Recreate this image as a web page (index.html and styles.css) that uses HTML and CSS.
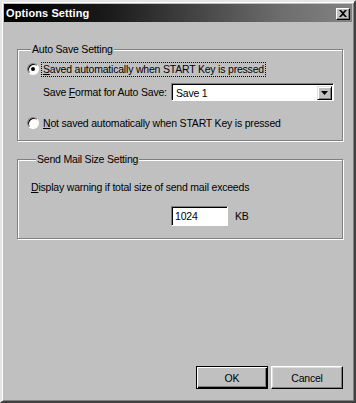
FILE: index.html
```html
<!DOCTYPE html>
<html>
<head>
<meta charset="utf-8">
<link rel="stylesheet" href="styles.css">
</head>
<body>
<div class="window">
  <div class="titlebar">
    <span class="title">Options Setting</span>
    <span class="close">
      <svg width="8" height="7" viewBox="0 0 8 7"><path d="M0 0h2l2 2 2-2h2L5 3.5 8 7H6L4 5 2 7H0l3-3.5z" fill="#000"/></svg>
    </span>
  </div>
  <div class="content">
    <fieldset class="group group-autosave">
      <legend>Auto Save Setting</legend>
      <div class="radio-row">
        <span class="radio checked"><span class="dot"></span></span>
        <span class="label focus"><u>S</u>aved automatically when START Key is pressed</span>
      </div>
      <div class="format-row">
        <span class="label">Save <u>F</u>ormat for Auto Save:</span>
        <div class="combo">
          <span class="combo-value">Save 1</span>
          <span class="combo-btn"><svg width="7" height="4" viewBox="0 0 7 4"><path d="M0 0h7L3.5 4z" fill="#000"/></svg></span>
        </div>
      </div>
      <div class="radio-row second">
        <span class="radio"></span>
        <span class="label"><u>N</u>ot saved automatically when START Key is pressed</span>
      </div>
    </fieldset>
    <fieldset class="group group-mail">
      <legend>Send Mail Size Setting</legend>
      <div class="warn"><u>D</u>isplay warning if total size of send mail exceeds</div>
      <div class="size-row">
        <span class="textbox">1024</span>
        <span class="unit">KB</span>
      </div>
    </fieldset>
    <div class="buttons">
      <button class="btn default">OK</button>
      <button class="btn">Cancel</button>
    </div>
  </div>
</div>
</body>
</html>
```

FILE: styles.css
```css
html, body {
  margin: 0;
  padding: 0;
  background: #c0c0c0;
}
body {
  font-family: "Liberation Sans", Arial, sans-serif;
  font-size: 10.5px;
  letter-spacing: -0.2px;
  color: #000;
}
.window {
  box-sizing: border-box;
  width: 356px;
  height: 403px;
  background: #c0c0c0;
  border-top: 2px solid #e6e6e6;
  border-left: 2px solid #e6e6e6;
  border-right: 2px solid #404040;
  border-bottom: 2px solid #404040;
  box-shadow: inset 1px 1px #fff, inset -1px -1px #808080;
  padding: 2px;
  display: flex;
  flex-direction: column;
}
.titlebar {
  height: 18px;
  flex: none;
  display: flex;
  align-items: center;
  justify-content: space-between;
  background: linear-gradient(to right, #000 0%, #1a1a1a 30%, #6e6e6e 80%, #828282 100%);
  padding: 0 2px;
}
.title {
  color: #fff;
  font-weight: bold;
  font-size: 11px;
  letter-spacing: 0.1px;
}
.close {
  width: 14px;
  height: 12px;
  box-sizing: border-box;
  background: #c0c0c0;
  border-top: 1px solid #fff;
  border-left: 1px solid #fff;
  border-right: 1px solid #000;
  border-bottom: 1px solid #000;
  box-shadow: inset -1px -1px #808080;
  display: flex;
  align-items: center;
  justify-content: center;
  margin-top: 1px;
}
.content {
  flex: 1;
  display: flex;
  flex-direction: column;
  padding: 20px 9px 10px 13px;
}
.group {
  margin: 0;
  padding: 6px 8px 10px 8px;
  border: 1px solid #808080;
  box-shadow: inset 1px 1px #fff, 1px 1px #fff;
  min-width: 0;
}
.group legend {
  padding: 0 1px;
  margin-left: 5px;
  line-height: 14px;
  background: #c0c0c0;
}
.radio-row {
  display: flex;
  align-items: center;
  height: 14px;
}
.radio-row.second {
  margin-top: 15px;
}
.radio {
  width: 12px;
  height: 12px;
  box-sizing: border-box;
  border-radius: 50%;
  background: #fff;
  border: 1px solid;
  border-color: #808080 #fff #fff #808080;
  box-shadow: inset 1px 1px #000;
  display: flex;
  align-items: center;
  justify-content: center;
  margin-left: 1px;
  margin-right: 4px;
  flex: none;
}
.radio .dot {
  width: 4px;
  height: 4px;
  border-radius: 50%;
  background: #000;
}
.label {
  white-space: nowrap;
  line-height: 13px;
}
.focus {
  outline: 1px dotted #000;
  outline-offset: 0;
  padding: 0 1px;
  margin-left: -1px;
}
.format-row {
  display: flex;
  align-items: center;
  margin-top: 7px;
  padding-left: 17px;
}
.combo {
  margin-left: auto;
  width: 163px;
  flex: none;
  height: 18px;
  box-sizing: border-box;
  background: #fff;
  border-top: 1px solid #808080;
  border-left: 1px solid #808080;
  border-right: 1px solid #fff;
  border-bottom: 1px solid #fff;
  box-shadow: inset 1px 1px #000;
  display: flex;
  align-items: center;
  justify-content: space-between;
  padding: 1px 1px 0 4px;
}
.combo-value {
  line-height: 14px;
}
.combo-btn {
  width: 15px;
  height: 14px;
  box-sizing: border-box;
  background: #c0c0c0;
  border-top: 1px solid #dfdfdf;
  border-left: 1px solid #dfdfdf;
  border-right: 1px solid #000;
  border-bottom: 1px solid #000;
  box-shadow: inset 1px 1px #fff, inset -1px -1px #808080;
  display: flex;
  align-items: center;
  justify-content: center;
}
.group-mail {
  margin-top: 11px;
  padding: 14px 8px 12px 13px;
}
.warn {
  line-height: 14px;
  white-space: nowrap;
}
.size-row {
  display: flex;
  align-items: center;
  margin-top: 12px;
  padding-left: 140px;
}
.textbox {
  width: 57px;
  height: 20px;
  box-sizing: border-box;
  background: #fff;
  border-top: 1px solid #808080;
  border-left: 1px solid #808080;
  border-right: 1px solid #fff;
  border-bottom: 1px solid #fff;
  box-shadow: inset 1px 1px #000;
  padding: 3px 0 0 3px;
  line-height: 13px;
}
.unit {
  margin-left: 7px;
}
.buttons {
  margin-top: auto;
  display: flex;
  justify-content: flex-end;
  gap: 3px;
}
.btn {
  font-family: "Liberation Sans", Arial, sans-serif;
  font-size: 10.5px;
  letter-spacing: -0.2px;
  width: 72px;
  height: 23px;
  box-sizing: border-box;
  background: #c0c0c0;
  border-top: 1px solid #fff;
  border-left: 1px solid #fff;
  border-right: 1px solid #000;
  border-bottom: 1px solid #000;
  box-shadow: inset -1px -1px #808080, inset 1px 1px #dfdfdf;
  padding: 0;
  color: #000;
}
.btn.default {
  border: 1px solid #000;
  box-shadow: inset 1px 1px #fff, inset -1px -1px #000, inset -2px -2px #808080;
}
```
